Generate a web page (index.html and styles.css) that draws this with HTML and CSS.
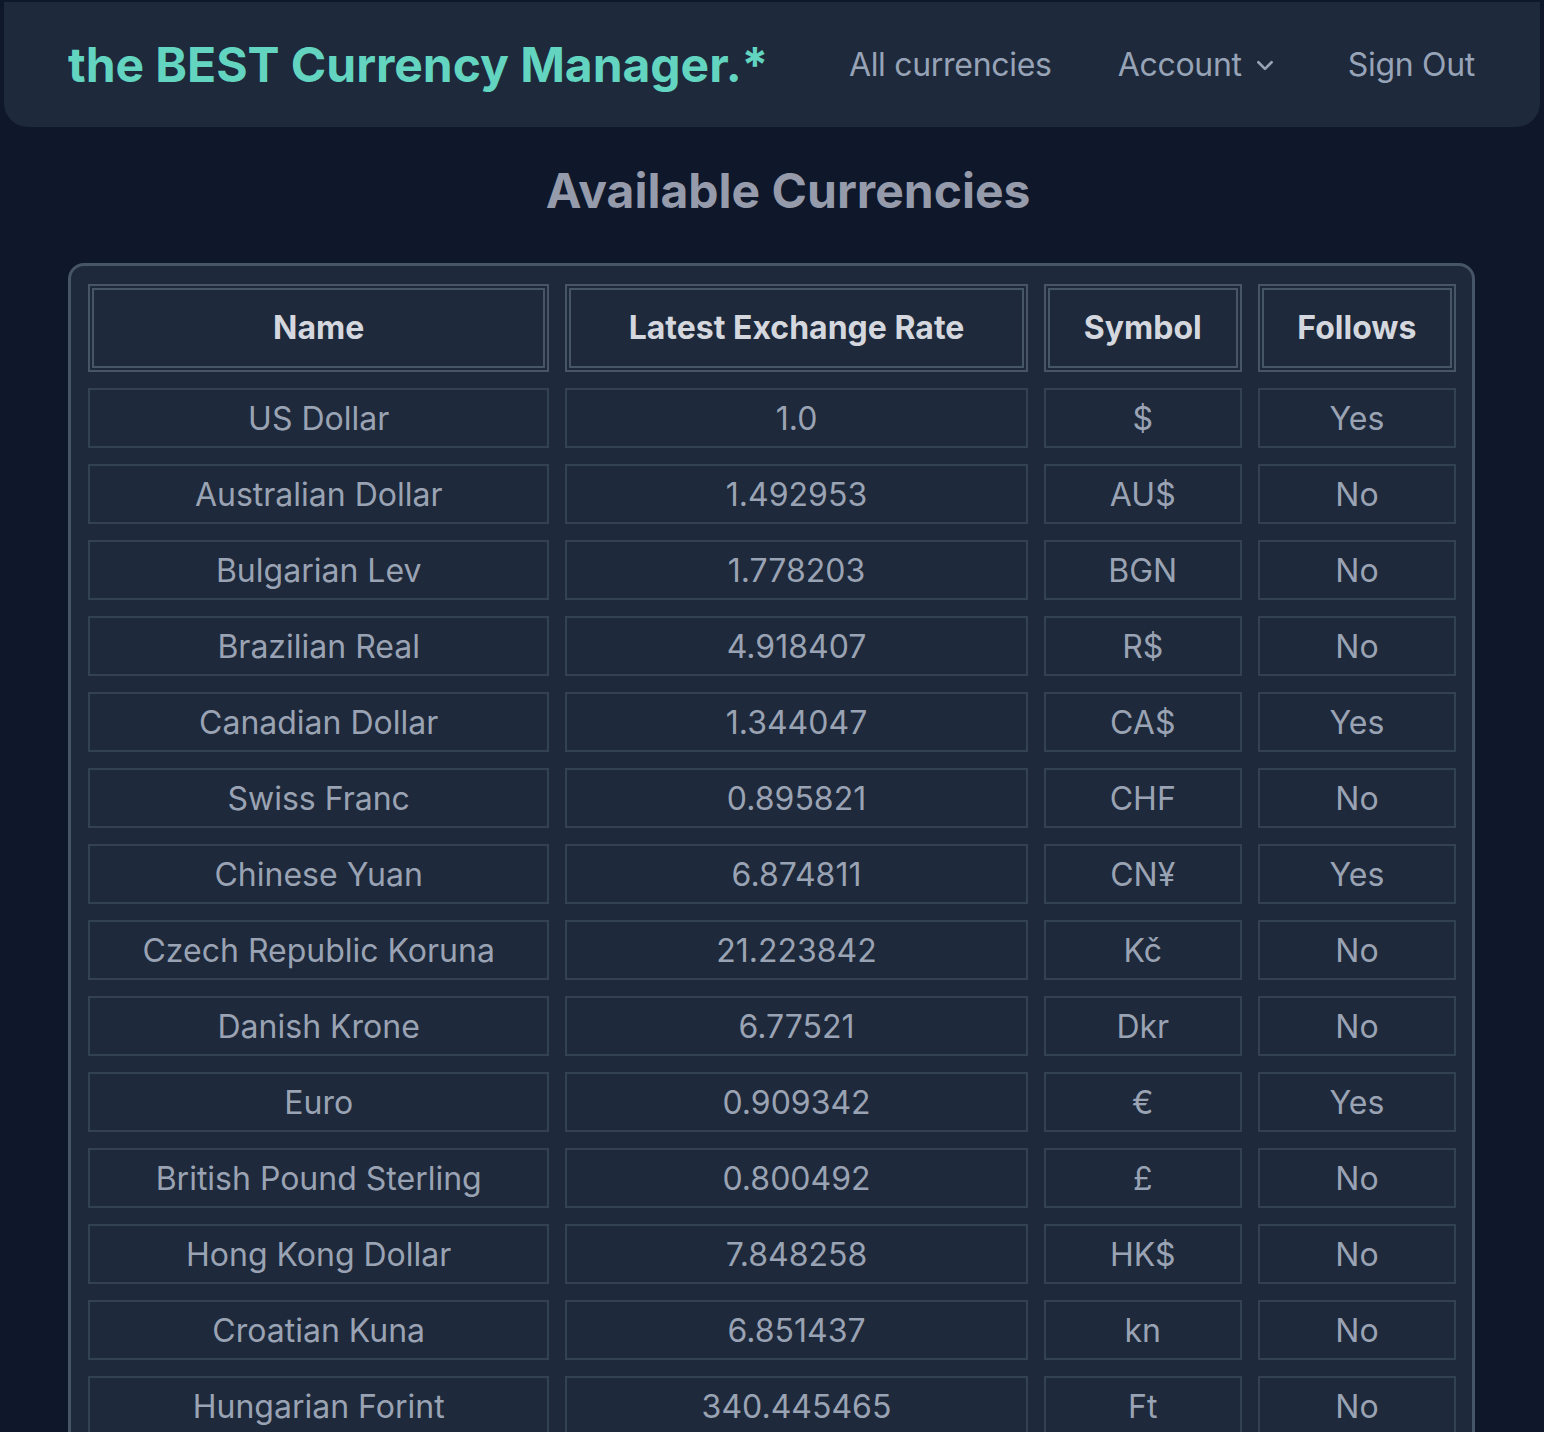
FILE: index.html
```html
<!DOCTYPE html>
<html lang="en">
<head>
<meta charset="utf-8">
<title>the BEST Currency Manager</title>
<link rel="stylesheet" href="styles.css">
</head>
<body>
<header class="topbar">
  <a class="logo" href="#">the BEST Currency Manager.*</a>
  <nav class="nav">
    <a class="nav-link" href="#">All currencies</a>
    <a class="nav-link account" href="#">Account
      <svg class="chev" viewBox="0 0 20 20" width="20" height="20" aria-hidden="true"><path d="M4 7.5l6 6 6-6" fill="none" stroke="currentColor" stroke-width="2.4" stroke-linecap="round" stroke-linejoin="round"/></svg>
    </a>
    <a class="nav-link" href="#">Sign Out</a>
  </nav>
</header>
<main class="main">
  <h1 class="title">Available Currencies</h1>
  <div class="card">
    <table class="ctable">
      <thead>
        <tr>
          <th class="c-name">Name</th>
          <th class="c-rate">Latest Exchange Rate</th>
          <th class="c-sym">Symbol</th>
          <th class="c-fol">Follows</th>
        </tr>
      </thead>
      <tbody>
        <tr><td>US Dollar</td><td>1.0</td><td>$</td><td>Yes</td></tr>
        <tr><td>Australian Dollar</td><td>1.492953</td><td>AU$</td><td>No</td></tr>
        <tr><td>Bulgarian Lev</td><td>1.778203</td><td>BGN</td><td>No</td></tr>
        <tr><td>Brazilian Real</td><td>4.918407</td><td>R$</td><td>No</td></tr>
        <tr><td>Canadian Dollar</td><td>1.344047</td><td>CA$</td><td>Yes</td></tr>
        <tr><td>Swiss Franc</td><td>0.895821</td><td>CHF</td><td>No</td></tr>
        <tr><td>Chinese Yuan</td><td>6.874811</td><td>CN¥</td><td>Yes</td></tr>
        <tr><td>Czech Republic Koruna</td><td>21.223842</td><td>Kč</td><td>No</td></tr>
        <tr><td>Danish Krone</td><td>6.77521</td><td>Dkr</td><td>No</td></tr>
        <tr><td>Euro</td><td>0.909342</td><td>€</td><td>Yes</td></tr>
        <tr><td>British Pound Sterling</td><td>0.800492</td><td>£</td><td>No</td></tr>
        <tr><td>Hong Kong Dollar</td><td>7.848258</td><td>HK$</td><td>No</td></tr>
        <tr><td>Croatian Kuna</td><td>6.851437</td><td>kn</td><td>No</td></tr>
        <tr><td>Hungarian Forint</td><td>340.445465</td><td>Ft</td><td>No</td></tr>
      </tbody>
    </table>
  </div>
</main>
</body>
</html>
```

FILE: styles.css
```css
* { box-sizing: border-box; }
html, body { margin: 0; padding: 0; }
body {
  background: #0f172a;
  font-family: Inter, "Noto Sans", sans-serif;
  color: #94a3b8;
}
a { text-decoration: none; color: inherit; }

.topbar {
  margin: 2px 4px 0;
  height: 125px;
  background: #1e293b;
  border-radius: 0 0 24px 24px;
  display: flex;
  align-items: center;
  justify-content: space-between;
  padding: 0 65px 0 64px;
}
.logo {
  font-size: 48px;
  font-weight: 700;
  color: #62d4c0;
  letter-spacing: -0.05px;
  line-height: 1;
}
.nav {
  display: flex;
  align-items: center;
  gap: 66px;
}
.nav-link {
  font-size: 32px;
  line-height: 1;
  color: #97a3b6;
  display: flex;
  align-items: center;
  letter-spacing: -0.3px;
}
.account { gap: 12px; margin-right: 6px; }
.chev { width: 22px; height: 22px; }

.main {
  padding: 0 69px 0 68px;
}
.title {
  margin: 32px 0 40px;
  text-align: center;
  font-size: 48px;
  line-height: 64px;
  font-weight: 700;
  color: #959baa;
  padding-left: 33px;
}
.card {
  border: 3px solid #475569;
  border-radius: 16px;
  background: #1e293b;
  padding: 2px 0 0 1px;
}
.ctable {
  width: 1400px;
  table-layout: fixed;
  border-collapse: separate;
  border-spacing: 16px;
}
.ctable th, .ctable td { text-align: center; font-size: 32px; }
.ctable th {
  border: 6px double #475569;
  color: #d4d7de;
  font-weight: 700;
  height: 88px;
  padding: 0;
  line-height: 48px;
}
.ctable td {
  border: 2px solid #334155;
  height: 60px;
  padding: 2px 0 0;
  line-height: 54px;
  color: #9aa3b3;
}
.c-name { width: 461px; }
.c-rate { width: 462px; }
.c-sym { width: 198px; }
.c-fol { width: 198px; }
```
